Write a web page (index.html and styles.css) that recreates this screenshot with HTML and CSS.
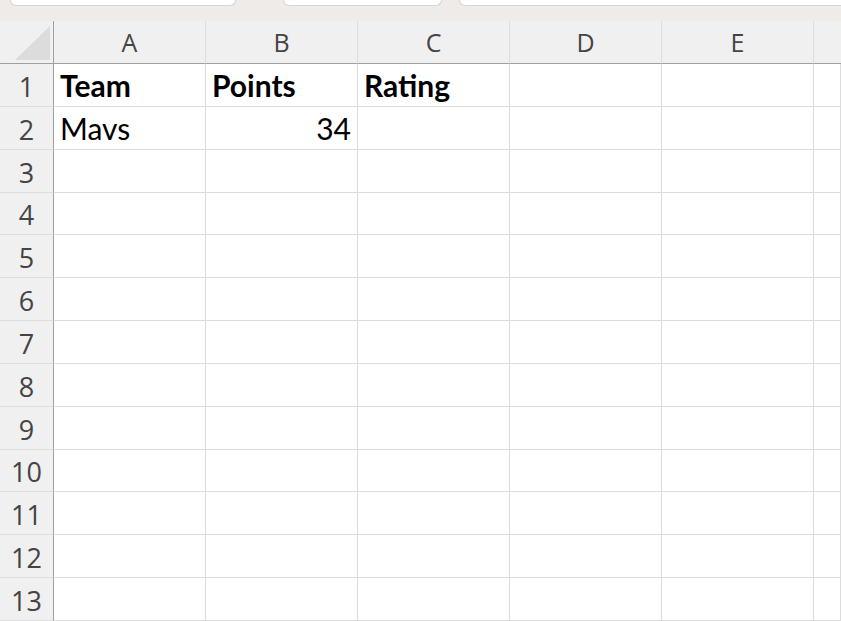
FILE: index.html
```html
<!DOCTYPE html>
<html lang="en">
<head>
  <meta charset="UTF-8" />
  <title>Sheet</title>
  <link rel="stylesheet" href="styles.css">
</head>
<body>
  <div class="topbar">
    <div class="box box-name"></div>
    <div class="box box-mid"></div>
    <div class="box box-formula"></div>
  </div>

  <div class="sheet">
    <div class="corner"><span class="tri"></span></div>
    <div class="colhead">A</div>
    <div class="colhead">B</div>
    <div class="colhead">C</div>
    <div class="colhead">D</div>
    <div class="colhead">E</div>
    <div class="colhead last"></div>

    <div class="rowhead">1</div>
    <div class="cell bold">Team</div>
    <div class="cell bold">Points</div>
    <div class="cell bold">Rating</div>
    <div class="cell"></div>
    <div class="cell"></div>
    <div class="cell"></div>

    <div class="rowhead">2</div>
    <div class="cell">Mavs</div>
    <div class="cell num">34</div>
    <div class="cell"></div>
    <div class="cell"></div>
    <div class="cell"></div>
    <div class="cell"></div>
  </div>

  <script>
    // empty rows 3..13
    const sheet = document.querySelector('.sheet');
    for (let r = 3; r <= 13; r++) {
      const head = document.createElement('div');
      head.className = 'rowhead';
      head.textContent = r;
      sheet.appendChild(head);
      for (let c = 0; c < 6; c++) {
        const cell = document.createElement('div');
        cell.className = 'cell';
        sheet.appendChild(cell);
      }
    }
  </script>
</body>
</html>
```

FILE: styles.css
```css
* {
  margin: 0;
  padding: 0;
  box-sizing: border-box;
}
body {
  background: #ffffff;
  overflow: hidden;
  width: 841px;
  height: 621px;
}
.topbar {
  height: 21px;
  background: #eeebe8;
  display: flex;
  align-items: flex-start;
  overflow: hidden;
}
.box {
  height: 6px;
  background: #ffffff;
  border: 1px solid #d8d5d2;
  border-top: none;
  border-radius: 0 0 8px 8px;
}
.box-name {
  width: 226px;
  margin-left: 10px;
}
.box-mid {
  width: 159px;
  margin-left: 47px;
}
.box-formula {
  flex: 1;
  margin-left: 17px;
  border-right: none;
  border-radius: 0 0 0 8px;
}
.sheet {
  display: grid;
  grid-template-columns: 54px 152px 152px 152px 152px 152px 1fr;
  grid-template-rows: 43px;
  grid-auto-rows: 42.85px;
}
.corner {
  background: #f0f0f0;
  border-right: 1px solid #a0a0a0;
  border-bottom: 1px solid #a0a0a0;
  position: relative;
}
.tri {
  position: absolute;
  right: 3px;
  bottom: 3px;
  width: 35px;
  height: 34px;
  background: #dcdcdc;
  clip-path: polygon(100% 0, 100% 100%, 0 100%);
}
.colhead {
  background: #f0f0f0;
  border-right: 1px solid #dcdcdc;
  border-bottom: 1px solid #a0a0a0;
  display: flex;
  justify-content: center;
  align-items: center;
  font-family: "Open Sans", sans-serif;
  font-size: 25px;
  color: #444444;
  padding-bottom: 1px;
}
.colhead.last {
  border-right: none;
}
.rowhead {
  background: #f0f0f0;
  border-right: 1px solid #a0a0a0;
  border-bottom: 1px solid #dcdcdc;
  display: flex;
  justify-content: center;
  align-items: flex-end;
  font-family: "Open Sans", sans-serif;
  font-size: 27px;
  line-height: 1;
  color: #444444;
  padding-bottom: 6px;
}
.cell {
  border-right: 1px solid #dcdcdc;
  border-bottom: 1px solid #dcdcdc;
  display: flex;
  align-items: flex-end;
  padding: 0 6px 6px 6px;
  font-family: Lato, sans-serif;
  font-size: 30px;
  line-height: 1;
  color: #000000;
  white-space: nowrap;
}
.bold {
  font-weight: bold;
}
.num {
  justify-content: flex-end;
}
```
